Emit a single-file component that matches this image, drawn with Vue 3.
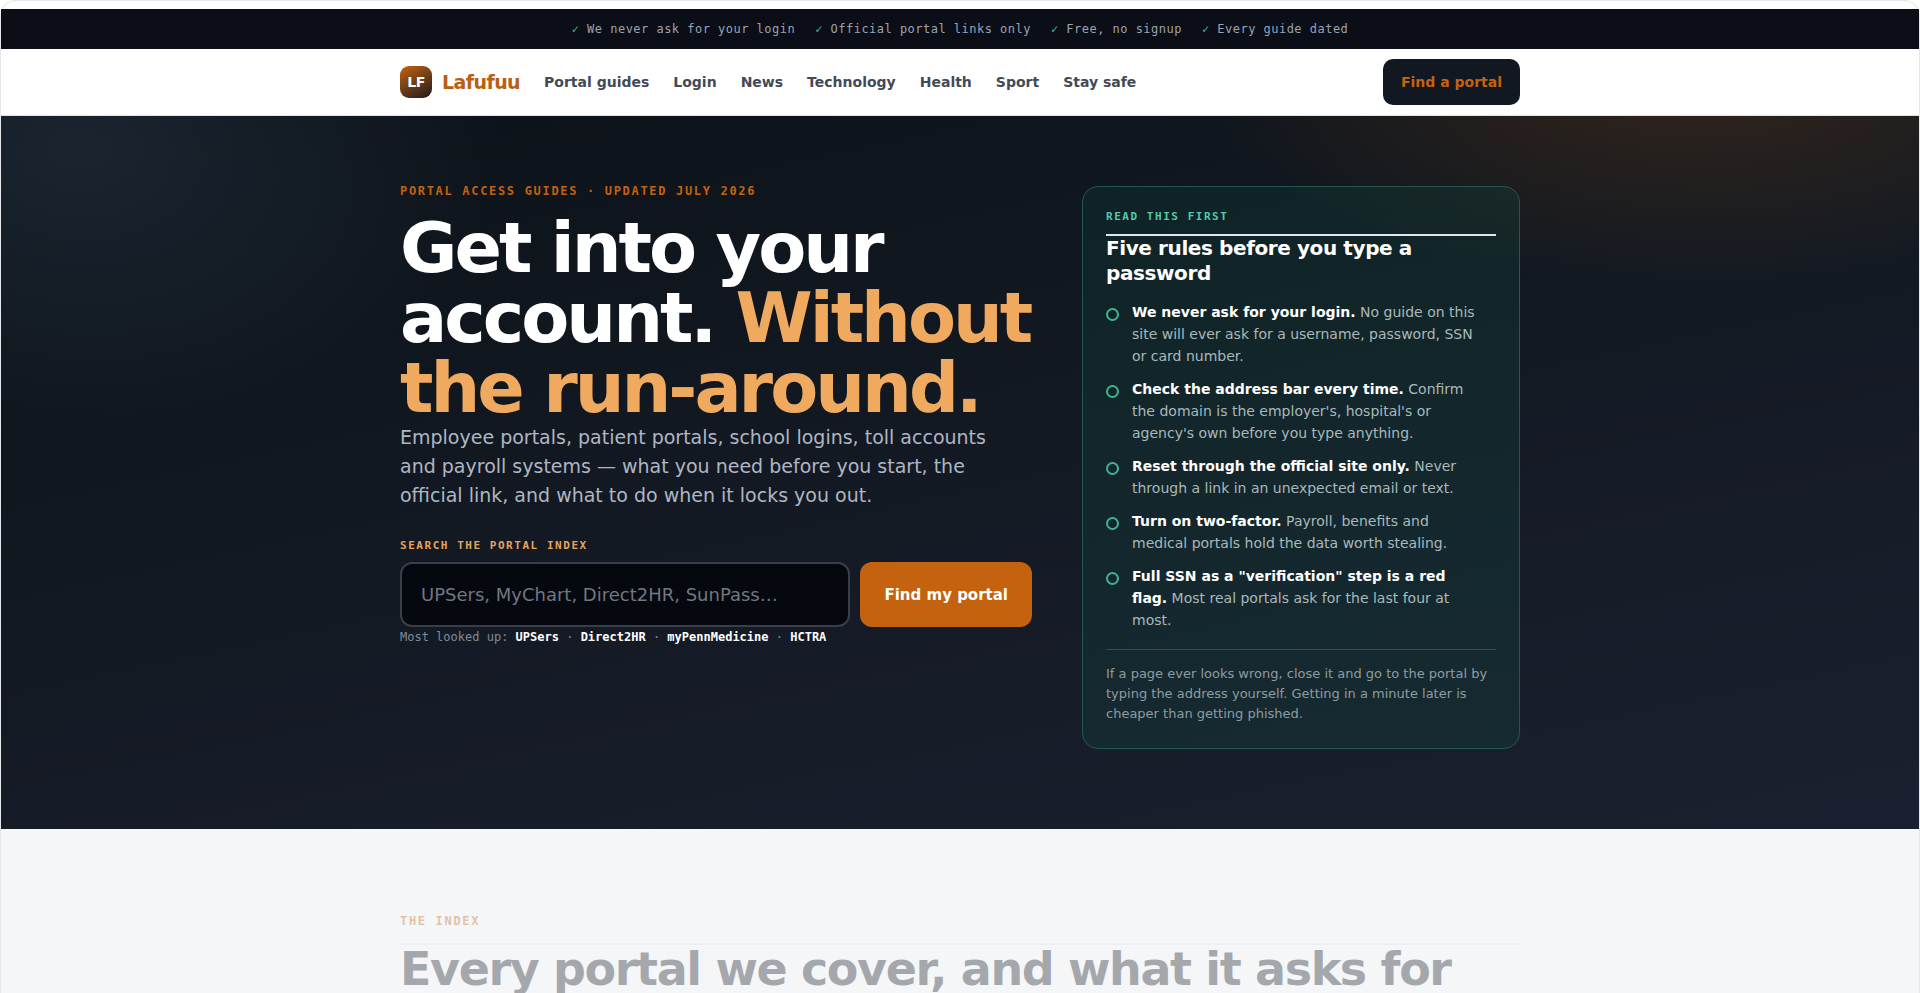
<script setup>
import { ref } from 'vue'

const query = ref('')
const promises = ['We never ask for your login', 'Official portal links only', 'Free, no signup', 'Every guide dated']
const nav = ['Portal guides', 'Login', 'News', 'Technology', 'Health', 'Sport', 'Stay safe']
const popular = ['UPSers', 'Direct2HR', 'myPennMedicine', 'HCTRA']
const rules = [
  { title: 'We never ask for your login.', text: 'No guide on this site will ever ask for a username, password, SSN or card number.' },
  { title: 'Check the address bar every time.', text: "Confirm the domain is the employer's, hospital's or agency's own before you type anything." },
  { title: 'Reset through the official site only.', text: 'Never through a link in an unexpected email or text.' },
  { title: 'Turn on two-factor.', text: 'Payroll, benefits and medical portals hold the data worth stealing.' },
  { title: 'Full SSN as a "verification" step is a red flag.', text: 'Most real portals ask for the last four at most.' }
]
</script>

<template>
  <div class="page">
    <ul class="topbar">
      <li v-for="p in promises" :key="p"><span class="tick">✓</span> {{ p }}</li>
    </ul>

    <header class="header">
      <div class="wrap header-row">
        <a class="brand" href="#"><span class="mark">LF</span><span>Lafufuu</span></a>
        <nav class="nav" aria-label="Main">
          <a v-for="n in nav" :key="n" href="#">{{ n }}</a>
        </nav>
        <a class="cta" href="#search">Find a portal</a>
      </div>
    </header>

    <main>
      <section class="hero">
        <div class="wrap hero-grid">
          <div>
            <p class="eyebrow">Portal access guides · Updated July 2026</p>
            <h1>Get into your account. <em>Without the run-around.</em></h1>
            <p class="lead">Employee portals, patient portals, school logins, toll accounts and payroll systems — what you need before you start, the official link, and what to do when it locks you out.</p>
            <form class="search" @submit.prevent>
              <label for="search">Search the portal index</label>
              <div class="search-row">
                <input id="search" v-model="query" type="text" placeholder="UPSers, MyChart, Direct2HR, SunPass…">
                <button type="submit">Find my portal</button>
              </div>
            </form>
            <p class="popular">Most looked up: <template v-for="(p, i) in popular" :key="p"><template v-if="i"> · </template><a href="#">{{ p }}</a></template></p>
          </div>

          <aside class="card">
            <p class="card-eyebrow">Read this first</p>
            <h2>Five rules before you type a password</h2>
            <ul class="rules">
              <li v-for="r in rules" :key="r.title"><span class="ring"></span><p><strong>{{ r.title }}</strong> {{ r.text }}</p></li>
            </ul>
            <p class="note">If a page ever looks wrong, close it and go to the portal by typing the address yourself. Getting in a minute later is cheaper than getting phished.</p>
          </aside>
        </div>
      </section>

      <section class="index">
        <div class="wrap index-head">
          <p class="eyebrow">The index</p>
          <h2>Every portal we cover, and what it asks for</h2>
        </div>
      </section>
    </main>
  </div>
</template>

<style>
body {
  margin: 0;
  background: #fff;
}
</style>

<style scoped>
.page {
  box-sizing: border-box;
  min-height: 100vh;
  display: flex;
  flex-direction: column;
  padding-top: 8px;
  border: 1px solid #e5e7eb;
  border-bottom: 0;
  border-radius: 16px 16px 0 0;
  font-family: "DejaVu Sans", sans-serif;
  color: #11161f;
}
main {
  flex: 1;
  display: flex;
  flex-direction: column;
}
h1, h2, p, ul {
  margin: 0;
  padding: 0;
}
ul {
  list-style: none;
}
a {
  color: inherit;
  text-decoration: none;
}
.wrap {
  box-sizing: border-box;
  width: 100%;
  max-width: 1168px;
  margin: 0 auto;
  padding: 0 24px;
}
.topbar {
  display: flex;
  flex-wrap: wrap;
  justify-content: center;
  gap: 4px 20px;
  padding: 10px 24px;
  background: #0b0e16;
  color: #9aa3b2;
  font: 12px/20px "DejaVu Sans Mono", monospace;
  letter-spacing: 0.04em;
}
.tick {
  color: #3fb896;
}
.header {
  background: #fff;
  border-bottom: 1px solid #dfe2e7;
}
.header-row {
  display: flex;
  align-items: center;
  gap: 24px;
  min-height: 66px;
}
.brand {
  display: flex;
  align-items: center;
  gap: 10px;
  color: #b95f12;
  font-size: 19px;
  font-weight: 700;
  letter-spacing: -0.03em;
}
.mark {
  display: grid;
  place-items: center;
  width: 32px;
  height: 32px;
  border-radius: 9px;
  background: linear-gradient(150deg, #c4620f, #1b1a1e);
  color: #fff;
  font-size: 14px;
}
.nav {
  display: flex;
  gap: 24px;
  color: #434a57;
  font-size: 14px;
  font-weight: 700;
}
.cta {
  margin-left: auto;
  padding: 12px 18px;
  border-radius: 10px;
  background: #121821;
  color: #c4620f;
  font-size: 14px;
  font-weight: 700;
  line-height: 22px;
}
.hero {
  padding: 70px 0 80px;
  background:
    radial-gradient(760px 340px at 88% -8%, rgba(196, 98, 15, 0.2), transparent 66%),
    radial-gradient(620px 420px at 4% 4%, rgba(50, 70, 88, 0.36), transparent 68%),
    linear-gradient(168deg, #0c1218 0%, #131922 45%, #1b2030 100%);
}
.hero-grid {
  display: grid;
  grid-template-columns: 632fr 438fr;
  gap: 50px;
  align-items: start;
}
.eyebrow {
  color: #c4620f;
  font: 700 12px/20px "DejaVu Sans Mono", monospace;
  letter-spacing: 0.14em;
  text-transform: uppercase;
  margin-top: -5px;
}
h1 {
  margin-top: 12px;
  color: #fff;
  font-size: 70px;
  font-weight: 700;
  line-height: 70px;
  letter-spacing: -3px;
}
h1 em {
  color: #f0aa60;
  font-style: normal;
}
.lead {
  max-width: 600px;
  color: #aeb6c4;
  font-size: 19px;
  line-height: 29px;
}
.search {
  margin-top: 26px;
}
.search label {
  display: block;
  margin-bottom: 6px;
  color: #e8a35a;
  font: 700 11px/20px "DejaVu Sans Mono", monospace;
  letter-spacing: 0.14em;
  text-transform: uppercase;
}
.search-row {
  display: flex;
  gap: 10px;
}
.search input {
  box-sizing: border-box;
  flex: 1;
  min-width: 0;
  height: 65px;
  padding: 0 19px;
  border: 2px solid #393e4a;
  border-radius: 12px;
  background: #05080e;
  color: #fff;
  font: 18px "DejaVu Sans", sans-serif;
}
.search input::placeholder {
  color: #717783;
  opacity: 1;
}
.search button {
  padding: 0 24px;
  border: 0;
  border-radius: 12px;
  background: #c4620f;
  color: #fff;
  font: 700 15px "DejaVu Sans", sans-serif;
}
.popular {
  color: #7f8b9c;
  font: 12px/20px "DejaVu Sans Mono", monospace;
}
.popular a {
  color: #fff;
  font-weight: 700;
}
.card {
  padding: 20px 23px 24px;
  border: 1px solid #23584f;
  border-radius: 16px;
  background: rgba(16, 90, 76, 0.2);
}
.card-eyebrow {
  color: #55c9a8;
  font: 700 11px/20px "DejaVu Sans Mono", monospace;
  letter-spacing: 0.14em;
  text-transform: uppercase;
}
.card h2 {
  margin-top: 7px;
  border-top: 2px solid #e2e6ec;
  color: #fff;
  font-size: 20px;
  line-height: 25px;
  letter-spacing: -0.02em;
}
.rules {
  display: grid;
  gap: 11px;
  margin-top: 15px;
  padding-right: 16px;
  color: #a9b8ba;
  font-size: 14px;
  line-height: 22px;
}
.rules li {
  display: flex;
  gap: 13px;
}
.rules strong {
  color: #fff;
}
.ring {
  box-sizing: border-box;
  flex: none;
  width: 13px;
  height: 13px;
  margin-top: 7px;
  border: 2px solid #41b394;
  border-radius: 50%;
}
.note {
  margin-top: 18px;
  padding-top: 14px;
  border-top: 1px solid #27584f;
  color: #8d9c9f;
  font-size: 13px;
  line-height: 20px;
}
.index {
  flex: 1;
  padding-top: 87px;
  background: #f4f6f8;
}
.index-head {
  opacity: 0.35;
}
.index h2 {
  margin-top: 12px;
  border-top: 2px solid #e2e6ec;
  color: #11161f;
  font-size: 46px;
  line-height: 48px;
  letter-spacing: -0.03em;
}
</style>
